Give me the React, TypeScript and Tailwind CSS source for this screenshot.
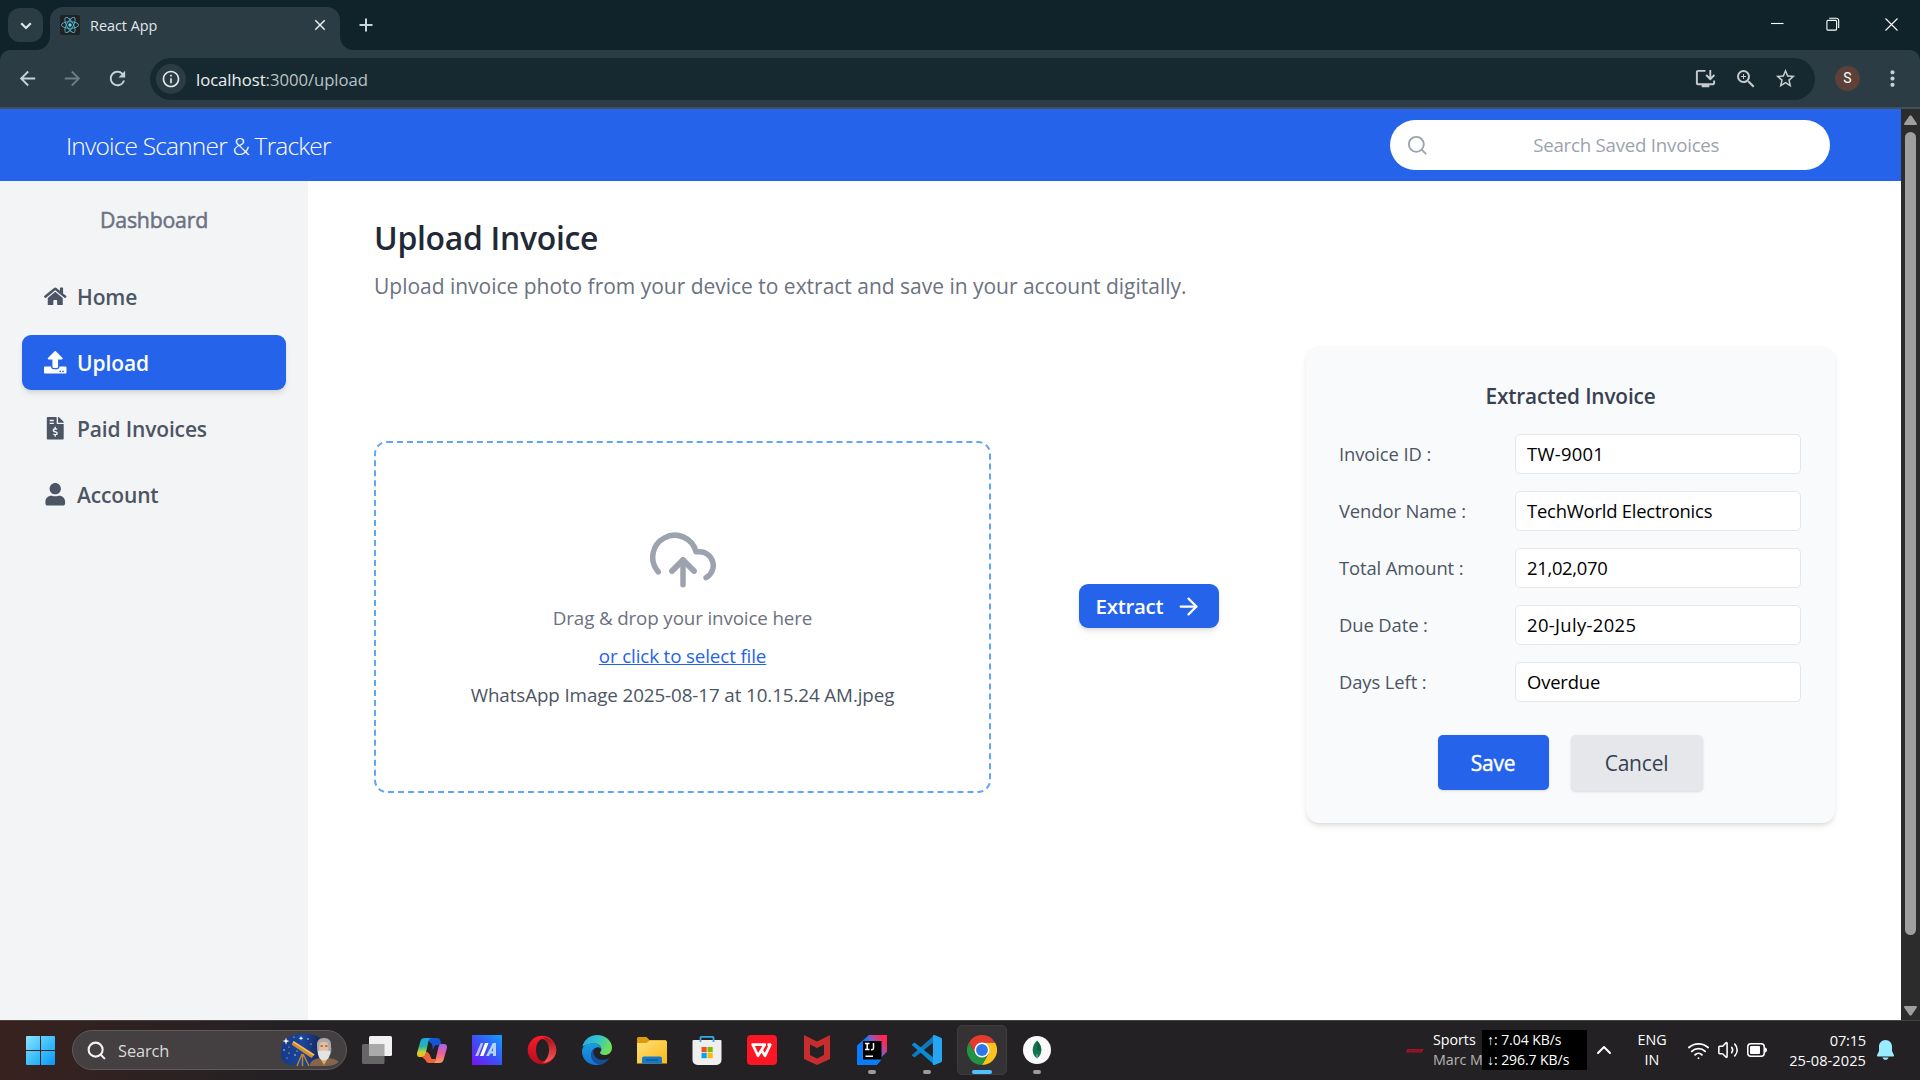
import type { ReactNode } from "react";
import { FaFileInvoiceDollar, FaHome, FaUpload, FaUser } from "react-icons/fa";
import { FiArrowRight, FiSearch, FiUploadCloud } from "react-icons/fi";
import {
  MdArrowBack,
  MdArrowForward,
  MdClose,
  MdInfoOutline,
  MdInstallDesktop,
  MdMoreVert,
  MdRefresh,
  MdStarOutline,
  MdZoomIn,
} from "react-icons/md";
import { ChevronUp, Search, Volume2, Wifi } from "lucide-react";

function ReactMark() {
  return (
    <svg viewBox="0 0 20 20" className="size-5">
      <rect width="20" height="20" rx="2" fill="#222" />
      <g fill="none" stroke="#4fb3cc" strokeWidth="0.9">
        <ellipse cx="10" cy="10" rx="8.6" ry="3.3" />
        <ellipse cx="10" cy="10" rx="8.6" ry="3.3" transform="rotate(60 10 10)" />
        <ellipse cx="10" cy="10" rx="8.6" ry="3.3" transform="rotate(120 10 10)" />
      </g>
      <circle cx="10" cy="10" r="1.7" fill="#61dafb" />
    </svg>
  );
}

function TabStrip() {
  return (
    <div className="flex h-[50px] shrink-0 bg-[#10232b]">
      <div className="ml-2 mt-2 flex h-[34px] w-[35px] items-center justify-center rounded-[12px] bg-[#2b3c44]">
        <svg viewBox="0 0 12 8" className="mt-px h-2 w-3" fill="none" stroke="#dfe5e8" strokeWidth="2.2">
          <path d="M1.2 1.2 6 6l4.8-4.8" />
        </svg>
      </div>
      <svg viewBox="0 0 14 14" className="-ml-[7px] mr-0 mt-9 h-[14px] w-[14px] self-start" fill="#2b3c44">
        <path d="M14 0v14H0C8 14 14 8 14 0z" />
      </svg>
      <div className="mt-[7px] flex h-[43px] w-[290px] items-center rounded-t-[13px] bg-[#2b3c44] pb-[7px] pl-[10px] pr-[11px]">
        <ReactMark />
        <span className="ml-[10px] flex-1 pt-px text-[14.4px] leading-5 text-[#e1e6e9]">React App</span>
        <MdClose className="size-[18px] text-[#e6ebed]" />
      </div>
      <svg viewBox="0 0 14 14" className="mt-9 h-[14px] w-[14px] self-start" fill="#2b3c44">
        <path d="M0 0v14h14C6 14 0 8 0 0z" />
      </svg>
      <svg viewBox="0 0 14 14" className="ml-[5px] mt-[18px] size-[14px]" stroke="#c8d6dc" strokeWidth="2">
        <path d="M7 .5v13M.5 7h13" />
      </svg>
      <div className="flex-1" />
      <svg viewBox="0 0 13 13" className="mt-[18px] size-[13px]" stroke="#fff" strokeWidth="1.1">
        <path d="M0 5.500h12.500" />
      </svg>
      <svg viewBox="0 0 14 14" className="ml-[42px] mt-[17px] size-[14px]" fill="none" stroke="#fff" strokeWidth="1.1">
        <rect x=".9" y="3.4" width="9.7" height="9.7" rx="1" />
        <path d="M3.2 1.2h7.3a2.2 2.2 0 0 1 2.2 2.2v7.6" />
      </svg>
      <svg viewBox="0 0 13 13" className="ml-[45px] mr-[22px] mt-[18px] size-[13px]" stroke="#fff" strokeWidth="1.1">
        <path d="M.5.5l12 12M12.500.5l-12 12" />
      </svg>
    </div>
  );
}

function Toolbar() {
  return (
    <div className="shrink-0 bg-[#10232b]">
      <div className="flex h-[59px] items-center rounded-t-[10px] border-b-2 border-[#435056] bg-[#2b3c44] text-[#c3d3da]">
        <MdArrowBack className="ml-4 size-[23px]" />
        <MdArrowForward className="ml-[22px] size-[23px] text-[#6c7d85]" />
        <MdRefresh className="ml-[22px] size-[23px]" />
        <div className="ml-[21px] flex h-[42px] w-[1665px] items-center rounded-full bg-[#162930] pl-[6px] pr-[18px] text-[#c7cbce]">
          <div className="flex size-[30px] items-center justify-center rounded-full bg-[#2b3c44]">
            <MdInfoOutline className="size-5 text-[#e1e6e9]" />
          </div>
          <div className="ml-[10px] flex-1 pt-[2px] text-[16.700px] tracking-[-0.04px] text-[#bcc2c5]">
            <span className="text-[#eceff0]">localhost</span>:3000/upload
          </div>
          <MdInstallDesktop className="size-[23px]" />
          <MdZoomIn className="ml-[17px] size-[24px]" />
          <MdStarOutline className="ml-[16px] size-[23px]" />
        </div>
        <div className="ml-[20px] flex size-[25px] items-center justify-center rounded-full bg-[#5d4037] font-[Roboto] text-[14px] text-white">
          S
        </div>
        <MdMoreVert className="ml-[20px] size-[25px]" />
      </div>
    </div>
  );
}

function AppHeader() {
  return (
    <header className="flex h-[72px] shrink-0 items-center justify-between bg-[#2563eb] pl-[66px] pr-[71px]">
      <h1 className="pt-[2px] text-[24.500px] font-light tracking-[-0.82px] text-white">Invoice Scanner &amp; Tracker</h1>
      <div className="flex h-[50px] w-[440px] items-center rounded-full bg-white px-[16px] text-[#9ca3af]">
        <FiSearch className="size-[22.500px]" />
        <span className="flex-1 pl-[18px] pr-2 text-center text-[18.700px] tracking-[-0.24px]">Search Saved Invoices</span>
      </div>
    </header>
  );
}

function NavItem({ icon, label, active = false }: { icon: ReactNode; label: string; active?: boolean }) {
  return (
    <a
      className={
        "flex h-[55px] items-center gap-[10.500px] rounded-[9px] px-[22px] text-[21px] font-semibold " +
        (active ? "bg-[#2563eb] text-white shadow-md tracking-[-0.1px]" : "text-[#4b5563] tracking-[-0.15px]")
      }
    >
      <span className="flex w-[22.500px] justify-center text-[22.500px]">{icon}</span>
      <span className="pt-[2px]">{label}</span>
    </a>
  );
}

function Sidebar() {
  return (
    <aside className="w-[308px] shrink-0 bg-[#f3f4f6] px-[22px] pt-[22px]">
      <p className="mb-[33px] text-center text-[21.300px] leading-[33px] tracking-[-0.22px] text-[#6b7280] [-webkit-text-stroke:0.5px]">
        Dashboard
      </p>
      <nav className="flex flex-col gap-[11px]">
        <NavItem icon={<FaHome />} label="Home" />
        <NavItem icon={<FaUpload />} label="Upload" active />
        <NavItem icon={<FaFileInvoiceDollar />} label="Paid Invoices" />
        <NavItem icon={<FaUser />} label="Account" />
      </nav>
    </aside>
  );
}

const fields = [
  { label: "Invoice ID :", value: "TW-9001", spacing: "tracking-[0.3px]" },
  { label: "Vendor Name :", value: "TechWorld Electronics", spacing: "tracking-[-0.2px]" },
  { label: "Total Amount :", value: "21,02,070", spacing: "tracking-[-0.3px]" },
  { label: "Due Date :", value: "20-July-2025", spacing: "tracking-[0.36px]" },
  { label: "Days Left :", value: "Overdue", spacing: "tracking-[-0.16px]" },
];

function ExtractedCard() {
  return (
    <section className="flex w-[529px] flex-col rounded-[13px] bg-[#f9fafb] px-[34px] pb-[32px] pt-[34px] shadow-md">
      <h3 className="mb-[21px] text-center text-[20.800px] font-semibold leading-[33px] tracking-[-0.15px] text-[#374151]">
        Extracted Invoice
      </h3>
      <div className="flex flex-col gap-[17px]">
        {fields.map((f) => (
          <div key={f.label} className="flex h-10 items-center justify-between text-[18.400px]">
            <span className="-ml-px tracking-[-0.1px] text-[#4b5563]">{f.label}</span>
            <div
              className={
                "flex h-10 w-[286px] items-center rounded-[5px] border border-[#e5e7eb] bg-white pl-[11px] text-black " + f.spacing
              }
            >
              {f.value}
            </div>
          </div>
        ))}
      </div>
      <div className="-ml-px mt-[33px] flex items-start justify-center gap-[22px] text-[21px]">
        <button className="h-[55px] w-[111px] rounded-[5px] bg-[#2563eb] pt-[2px] tracking-[-0.3px] text-white shadow-sm [-webkit-text-stroke:0.4px]">
          Save
        </button>
        <button className="h-[56px] w-[132px] rounded-[5px] bg-[#e5e7eb] pt-px tracking-[-0.2px] text-[#374151] shadow-sm">Cancel</button>
      </div>
    </section>
  );
}

function UploadPage() {
  return (
    <main className="flex-1 bg-white pl-[66px] pr-[66px] pt-[34px]">
      <h2 className="text-[31.900px] font-semibold leading-[45px] tracking-[-0.28px] text-[#1f2937]">Upload Invoice</h2>
      <p className="mt-[10px] text-[21px] leading-[32px] tracking-[-0.015px] text-[#6b7280]">
        Upload invoice photo from your device to extract and save in your account digitally.
      </p>
      <div className="mt-[44px] flex items-center justify-between">
        <div className="mb-[28px] mt-[95px] flex h-[352px] w-[617px] flex-col items-center self-start rounded-[13px] border-2 border-dashed border-[#60a5fa] pt-[84px]">
          <FiUploadCloud className="ml-px size-[66px] text-[#9ca3af]" />
          <p className="mt-[9.500px] text-[18.800px] leading-[30px] tracking-[-0.14px] text-[#6b7280]">Drag &amp; drop your invoice here</p>
          <p className="mt-[8px] text-[18.800px] leading-[30px] tracking-[-0.14px] text-[#2563eb] underline">or click to select file</p>
          <p className="mt-[9px] text-[18.800px] leading-[30px] tracking-[-0.1px] text-[#4b5563]">
            WhatsApp Image 2025-08-17 at 10.15.24 AM.jpeg
          </p>
        </div>
        <button className="mt-[43px] flex h-[44px] w-[140px] items-center justify-between rounded-[9px] bg-[#2563eb] pl-[17px] pr-[17px] text-[20.500px] font-semibold tracking-[-0.3px] text-white shadow-md">
          Extract
          <FiArrowRight className="size-[27px]" />
        </button>
        <ExtractedCard />
      </div>
    </main>
  );
}

function PageScrollbar() {
  return (
    <div className="flex w-[19px] shrink-0 flex-col items-center bg-[#2c2c2c]">
      <svg viewBox="0 0 13 10" className="mt-[6px] h-[10px] w-[13px]" fill="#9f9f9f">
        <path d="M5.300 1a1.500 1.500 0 0 1 2.400 0l5 7.300c.5.800 0 1.700-.9 1.700H1.200C.3 10-.2 9.100.3 8.300z" />
      </svg>
      <div className="mt-[7px] h-[803px] w-[11px] rounded-full bg-[#9f9f9f]" />
      <svg viewBox="0 0 13 10" className="mb-[4px] mt-auto h-[10px] w-[13px] rotate-180" fill="#9f9f9f">
        <path d="M5.300 1a1.500 1.500 0 0 1 2.400 0l5 7.300c.5.800 0 1.700-.9 1.700H1.200C.3 10-.2 9.100.3 8.300z" />
      </svg>
    </div>
  );
}

function WindowsLogo() {
  return (
    <svg viewBox="0 0 29 29" className="size-[29px]">
      <defs>
        <linearGradient id="win" gradientUnits="userSpaceOnUse" x1="0" y1="0" x2="29" y2="29">
          <stop offset="0" stopColor="#8be3ff" />
          <stop offset=".5" stopColor="#3fc0fb" />
          <stop offset="1" stopColor="#0a96f8" />
        </linearGradient>
      </defs>
      <path fill="url(#win)" d="M1 0h13v14H0V1a1 1 0 0 1 1-1zM15 0h13a1 1 0 0 1 1 1v13H15zM0 15h14v14H1a1 1 0 0 1-1-1zM15 15h14v13a1 1 0 0 1-1 1H15z" />
    </svg>
  );
}

function AstronomerPicture() {
  return (
    <svg viewBox="0 0 60 34" className="h-[34px] w-[60px]">
      <defs>
        <linearGradient id="sky" x1="0" y1="0" x2="1" y2="0">
          <stop offset="0" stopColor="#173a86" />
          <stop offset=".5" stopColor="#1a469c" />
          <stop offset=".8" stopColor="#182c66" />
          <stop offset="1" stopColor="#2b2f4a" stopOpacity="0" />
        </linearGradient>
      </defs>
      <path d="M3 10C7 3 15 1 24 1c10 0 18 3 22 8v23H11C3 31 0 26 1 19c0-3 .5-6 2-9z" fill="url(#sky)" />
      <g fill="#fff">
        <path d="M6 4.500l.8 2.800L9.500 8 6.800 8.900 6 12l-.8-3.100L2.500 8l2.700-.7zM21 3l.6 1.600 1.700.7-1.700.6L21 7.600l-.6-1.700-1.700-.6 1.700-.7z" />
        <circle cx="14" cy="4" r=".6" /><circle cx="4" cy="17" r=".7" /><circle cx="9" cy="20" r=".6" />
        <circle cx="15" cy="22" r=".7" /><circle cx="28" cy="6" r=".7" /><circle cx="7" cy="25" r=".5" />
        <circle cx="31" cy="11" r=".6" /><circle cx="9" cy="14" r=".5" /><circle cx="17" cy="18" r=".5" />
      </g>
      <path d="M22 21l-5 12M22.500 21v12M23 21l6 12" stroke="#c88325" strokeWidth="1.400" />
      <path d="M13.500 8l21 13.500-3 3.500L11.500 11.500z" fill="#d48f2c" />
      <path d="M13.500 8l21 13.500-1 1.300L12.800 9.300z" fill="#f3bd5c" />
      <path d="M29.500 33c1-6 6-8 14-8s13 1 15 4c-3 3-8 4-13 4z" fill="#87654c" />
      <path d="M41 27l3 5 3-5z" fill="#dcab54" />
      <path d="M37 13c-.5-5 2-8 7-8s7.500 3 7 8c.5 4 .5 7-1 9H38.500c-1-2-1.500-5-1.500-9z" fill="#a9a9a9" />
      <path d="M39.500 10c2-1.500 6.500-1.500 8.500 0l.5 9h-9.500z" fill="#e9bd9c" />
      <path d="M38 17.500c1.500 1 3 .2 5.700 0 2.800.2 4.800 1 6.300 0 .5 6-2 10-6 10s-6.500-4-6-10z" fill="#e3e3e3" />
      <path d="M40.500 13h2.300M45.200 13h2.300" stroke="#4c342b" strokeWidth="1" />
    </svg>
  );
}

function TaskView() {
  return (
    <svg viewBox="0 0 30 28" className="h-7 w-[30px]">
      <rect x="0" y="8" width="22.500" height="20" rx="1.500" fill="#666" />
      <rect x="7" y="0" width="23" height="20" rx="1.500" fill="#f1f1f1" />
      <path d="M7 8h15.500v12H8.500A1.500 1.500 0 0 1 7 18.500z" fill="#aaa" />
    </svg>
  );
}

function Copilot() {
  return (
    <svg viewBox="0 0 30 27" className="h-[27px] w-[30px]">
      <defs>
        <linearGradient id="cpa" x1="0" y1="0" x2="0" y2="1">
          <stop offset="0" stopColor="#1aa6e8" /><stop offset=".45" stopColor="#29b6a6" />
          <stop offset=".75" stopColor="#c9d334" /><stop offset="1" stopColor="#f7b51c" />
        </linearGradient>
        <linearGradient id="cpb" x1="0" y1="0" x2="0" y2="1">
          <stop offset="0" stopColor="#a766ee" /><stop offset=".5" stopColor="#ea5e9b" /><stop offset="1" stopColor="#ff9a55" />
        </linearGradient>
      </defs>
      <path d="M8 1h12c2 0 3 1 3.500 3l1.200 4h-4.500c-2 0-3 1-3.500 3l-.7 2L15 7z" fill="#1555d8" />
      <path d="M7.500 1H15c-2 0-3 1.200-3.500 3L8.700 17c-.5 2-1.700 3-3.700 3H3c-2.500 0-3.500-2-2.800-4.500L3.500 4C4 2 5.500 1 7.500 1z" fill="url(#cpa)" />
      <path d="M22.500 26H15c2 0 3-1.200 3.500-3l3-13c.5-2 1.700-3 3.700-3h2c2.300 0 3.200 2 2.600 4.500L26.500 23c-.5 2-2 3-4 3z" fill="url(#cpb)" />
      <path d="M5 20c2 0 3.200-1 3.700-3l.6-2c2 0 3.200 2 4 4l1.200 3h4.500l-.5 1c-.5 2-1.500 3-3.500 3h-3c-2 0-3-1-3.500-3z" fill="#f0643c" />
    </svg>
  );
}

function MyAsus() {
  return (
    <svg viewBox="0 0 30 30" className="size-[30px]">
      <defs>
        <linearGradient id="asus" x1="1" y1="0" x2="0" y2="1">
          <stop offset="0" stopColor="#12a0ff" /><stop offset=".5" stopColor="#3b52f6" /><stop offset="1" stopColor="#7613f5" />
        </linearGradient>
      </defs>
      <path d="M0 0h30v30H0z" fill="url(#asus)" />
      <path d="M8.800 8h2.500L6.200 21H3.200z" fill="#b9c4ff" />
      <path d="M13 8h3.500L11.500 21H8z" fill="#fff" />
      <path d="M20.800 8H24v13h-3v-2.500h-2.800L17 21h-3zM21 12.500l-1.500 3.700H21z" fill="#b5d3ff" fillRule="evenodd" />
    </svg>
  );
}

function Opera() {
  return (
    <svg viewBox="0 0 30 30" className="size-[30px]">
      <defs>
        <linearGradient id="op" x1="0" y1="0" x2="0" y2="1"><stop offset="0" stopColor="#ff1b2d" /><stop offset="1" stopColor="#b00d1f" /></linearGradient>
        <linearGradient id="oq" x1="0" y1="0" x2="0" y2="1"><stop offset="0" stopColor="#a01018" /><stop offset="1" stopColor="#ff5c5c" /></linearGradient>
      </defs>
      <ellipse cx="15" cy="15" rx="14.300" ry="14.300" fill="url(#op)" />
      <path d="M15 2c5 0 14.300 4 14.300 13S20 28.500 15 28c4-1 6-6 6-13S19 3 15 2z" fill="url(#oq)" />
      <ellipse cx="15.500" cy="15" rx="6.500" ry="10.900" fill="#232124" />
    </svg>
  );
}

function Edge() {
  return (
    <svg viewBox="0 0 30 30" className="size-[30px]">
      <defs>
        <linearGradient id="eg" x1="0" y1="0" x2="1" y2=".4"><stop offset="0" stopColor="#2aa5dc" /><stop offset=".5" stopColor="#2fc3cf" /><stop offset="1" stopColor="#6fe05a" /></linearGradient>
        <linearGradient id="eb" x1="0" y1="0" x2="0" y2="1"><stop offset="0" stopColor="#1b9de2" /><stop offset="1" stopColor="#1274cf" /></linearGradient>
      </defs>
      <path d="M.5 12C1.500 5 7.500 0 15 0c8.500 0 15 6 15 12.500 0 5-3.500 7.500-7.500 7.500-3 0-4.500-1-4.500-2.200 0-1 1.300-1.500 1.300-3.600C19.300 11 16.500 8.500 12 8.500 6.500 8.500 2 10.500.5 12z" fill="url(#eg)" />
      <path d="M0 15.500C.5 10.500 5.500 8.300 11 8.300c4.500 0 8 2.200 8.300 5.900-1-1.400-2.600-2-4.300-1.800-3.500.5-6 4-5.300 8C10.500 25 14 29 19 29.300 8 32.500-.5 25 0 15.500z" fill="url(#eb)" />
      <path d="M14 12.700c-3 2-3 5.500-1.500 8 2.500 4.500 9.500 5.500 14.700 2.300C25 27 21 29.500 17.500 29.700 12 28.500 8.500 24.500 9 19c.3-3.500 2.500-5.900 5-6.300z" fill="#11509c" />
    </svg>
  );
}

function Explorer() {
  return (
    <svg viewBox="0 0 30 27" className="h-[27px] w-[30px]">
      <defs><linearGradient id="fo" x1="0" y1="0" x2="1" y2="1"><stop offset="0" stopColor="#ffe07a" /><stop offset="1" stopColor="#fab915" /></linearGradient></defs>
      <path d="M0 1.500A1.500 1.500 0 0 1 1.500 0h8l3 3H29v5H0z" fill="#dc9b0e" />
      <path d="M0 6h9.500L12.500 3.500H28.500A1.500 1.500 0 0 1 30 5v21.500H0z" fill="url(#fo)" />
      <path d="M5 26.500V21.500a2 2 0 0 1 2-2h16a2 2 0 0 1 2 2v5z" fill="#1579cc" />
      <path d="M9 23h12" stroke="#0b4f93" strokeWidth="1.200" />
    </svg>
  );
}

function Store() {
  return (
    <svg viewBox="0 0 30 30" className="size-[30px]">
      <path d="M.5 6a1 1 0 0 1 1-1h27a1 1 0 0 1 1 1v19a5 5 0 0 1-5 5h-19a5 5 0 0 1-5-5z" fill="#efefef" />
      <path d="M8.500 7V2.500a.6.6 0 0 1 .6-.6h11.800a.6.6 0 0 1 .6.6V7" fill="none" stroke="#2aaee6" strokeWidth="1.800" />
      <path d="M9.500 12h5.200v5.200H9.500z" fill="#f25022" /><path d="M15.500 12h5.200v5.200h-5.200z" fill="#7fba00" />
      <path d="M9.500 18h5.200v5.200H9.500z" fill="#00a4ef" /><path d="M15.500 18h5.200v5.200h-5.200z" fill="#ffb900" />
    </svg>
  );
}

function Wps() {
  return (
    <svg viewBox="0 0 30 30" className="size-[30px]">
      <rect width="30" height="30" rx="4" fill="#fd1524" />
      <path
        d="M4.500 9.700h13.300l-6.800 11.100L5.800 9.700M14.500 15l3.500 5.800 5.300-11.100H20.500"
        fill="none"
        stroke="#fff"
        strokeWidth="2.700"
        strokeLinejoin="round"
      />
    </svg>
  );
}

function McAfee() {
  return (
    <svg viewBox="0 0 28 30" className="h-[30px] w-[28px]">
      <path d="M1 0l13 6.500L27 0v24l-13 6L1 24z" fill="#c52d2f" />
      <path d="M7 9.500l7 3.500 7-3.500V20l-7 3.500L7 20z" fill="#232124" />
    </svg>
  );
}

function IntelliJ() {
  return (
    <svg viewBox="0 0 30 30" className="size-[30px]">
      <defs><linearGradient id="ij" x1="0" y1="0.800" x2="1" y2="0"><stop offset=".1" stopColor="#087cfa" /><stop offset=".5" stopColor="#7a60c8" /><stop offset=".8" stopColor="#fe2857" /></linearGradient></defs>
      <path d="M12 0h18v16.500L22 25 13 18 6 6z" fill="url(#ij)" />
      <path d="M0 10.500L12 0 9 9l9 15h7l-5 6H0z" fill="#087cfa" />
      <path d="M5 6h7l12 2v17H5z" fill="#3b6fe0" />
      <path d="M6 6h18.500v18.500H6z" fill="#000" />
      <path d="M8 8.500h4.500M10.200 8.500v6M8 14.500h4.500M16.500 8v5c0 1.500-.8 1.800-2.500 1.600M8.500 21.300h7.500" fill="none" stroke="#fff" strokeWidth="1.500" />
    </svg>
  );
}

function VsCode() {
  return (
    <svg viewBox="0 0 30 30" className="size-[30px]">
      <path d="M22.500 6.500L2.600 22.600.4 21a1 1 0 0 1 0-1.600L22.500 0z" fill="#0f78bd" />
      <path d="M22.500 23.500L2.600 7.400.4 9a1 1 0 0 0 0 1.600L22.500 30z" fill="#0a8ad8" />
      <path d="M22.500 0L29 2.800c.6.300 1 .8 1 1.500v21.400c0 .7-.4 1.200-1 1.500L22.500 30c-.8.300-1.600-.1-1.600-1V1c0-.9.800-1.300 1.600-1z" fill="#27a4f2" />
    </svg>
  );
}

function Chrome() {
  return (
    <svg viewBox="0 0 48 48" className="size-[30px]">
      <path d="M24 24V12h20.800A24 24 0 0 1 24 48l10.400-18z" fill="#fcc31e" />
      <path d="M24 24l10.400 6L24 48A24 24 0 0 1 3.200 12l10.400 18z" fill="#229342" />
      <path d="M24 12h20.800A24 24 0 0 0 3.200 12l10.400 18z" fill="#e33b2e" />
      <circle cx="24" cy="24" r="12" fill="#fff" />
      <circle cx="24" cy="24" r="9.500" fill="#2f76e8" />
    </svg>
  );
}

function MongoCompass() {
  return (
    <svg viewBox="0 0 28 28" className="size-7">
      <circle cx="14" cy="14" r="14" fill="#f8f9f8" />
      <path d="M14 4.500c3 3 4.300 6 4.300 9.500 0 3.800-1.500 6-3.800 8h-1c-2.300-2-3.800-4.200-3.800-8C9.700 10.500 11 7.500 14 4.500z" fill="#13724f" />
      <path d="M14 5v9.500h4.300c0-4-1.500-7-4.300-9.500z" fill="#0d5f42" />
      <path d="M14 18v5" stroke="#9fc7b5" strokeWidth=".8" />
    </svg>
  );
}

function TaskSlot({ children, state = "idle" }: { children: ReactNode; state?: "idle" | "running" | "active" }) {
  return (
    <div className="flex w-[55px] justify-center">
      <div
        className={
          "relative flex size-[50px] items-center justify-center rounded-[5px] " +
          (state === "active" ? "border border-[#3d3b3e] bg-[#343235]" : "")
        }
      >
        {children}
        {state === "running" && <span className="absolute bottom-px left-[21px] h-1 w-2 rounded-full bg-[#9b9b9b]" />}
        {state === "active" && <span className="absolute bottom-0 left-[14px] h-1 w-5 rounded-full bg-[#4cc2ff]" />}
      </div>
    </div>
  );
}

function Taskbar() {
  return (
    <footer className="flex h-[60px] shrink-0 items-center border-t border-[#454345] bg-linear-to-r from-[#38221f] via-[#232124] via-15% to-[#232124] pb-px text-white">
      <div className="ml-[26px]">
        <WindowsLogo />
      </div>
      <div className="ml-[17px] flex h-10 w-[275px] items-center rounded-full border border-[#5e5a5b] bg-[#444041] pl-[13px] pr-[6px]">
        <Search className="size-[21px] text-[#f2f2f2]" strokeWidth={2.400} />
        <span className="ml-[11px] flex-1 pt-[2px] text-[16.400px] tracking-[-0.1px] text-[#dadada]">Search</span>
        <AstronomerPicture />
      </div>
      <div className="ml-[2.500px] flex">
        <TaskSlot><TaskView /></TaskSlot>
        <TaskSlot><Copilot /></TaskSlot>
        <TaskSlot><MyAsus /></TaskSlot>
        <TaskSlot><Opera /></TaskSlot>
        <TaskSlot><Edge /></TaskSlot>
        <TaskSlot><Explorer /></TaskSlot>
        <TaskSlot><Store /></TaskSlot>
        <TaskSlot><Wps /></TaskSlot>
        <TaskSlot><McAfee /></TaskSlot>
        <TaskSlot state="running"><IntelliJ /></TaskSlot>
        <TaskSlot state="running"><VsCode /></TaskSlot>
        <TaskSlot state="active"><Chrome /></TaskSlot>
        <TaskSlot state="running"><MongoCompass /></TaskSlot>
      </div>
      <div className="flex-1" />
      <svg viewBox="0 0 18 5" className="h-[5px] w-[18px]">
        <path d="M1.500 1h16L16 4.500H0z" fill="#a3142c" />
        <path d="M3 2.800h12" stroke="#48101a" strokeWidth=".8" strokeDasharray="1.500 1" />
      </svg>
      <div className="ml-[9px] flex w-[49px] flex-col overflow-hidden whitespace-nowrap text-[14.300px] leading-5 tracking-[-0.05px]">
        <span>Sports</span>
        <span className="text-[#b5b5b5]">Marc M</span>
      </div>
      <div className="flex h-10 w-[105px] flex-col whitespace-nowrap bg-black pl-[5px] text-[14px] leading-5 tracking-[-0.06px]">
        <span>↑: 7.04 KB/s</span>
        <span>↓: 296.7 KB/s</span>
      </div>
      <ChevronUp className="ml-[5px] size-6" strokeWidth={2} />
      <div className="ml-[16px] flex w-[40px] flex-col items-center text-[14.300px] leading-5">
        <span>ENG</span>
        <span>IN</span>
      </div>
      <Wifi className="ml-[15px] size-[23px]" strokeWidth={1.900} />
      <Volume2 className="ml-[7px] size-[22px]" strokeWidth={1.700} />
      <svg viewBox="0 0 20 14" className="ml-[8px] h-[14px] w-5">
        <rect x=".8" y=".8" width="16.400" height="12.400" rx="3" fill="none" stroke="#fff" strokeWidth="1.500" />
        <rect x="3" y="3" width="10" height="8" rx="1" fill="#fff" />
        <path d="M18 4.500c1.500.3 2 1.300 2 2.500s-.5 2.200-2 2.500z" fill="#fff" />
      </svg>
      <div className="ml-[19px] flex w-[80px] flex-col items-end whitespace-nowrap text-[14.600px] leading-5">
        <span className="tracking-[-0.2px]">07:15</span>
        <span className="tracking-[0.07px]">25-08-2025</span>
      </div>
      <svg viewBox="0 0 17 20" className="ml-[11px] mr-[26px] h-5 w-[17px]" fill="#99ebff">
        <path d="M8.500 0C4.500 0 2 3 2 6.500V11L.1 15c-.3.800.2 1.500 1 1.500h14.800c.8 0 1.300-.7 1-1.500L15 11V6.500C15 3 12.500 0 8.500 0zM5.500 17.500c.5 1.500 1.600 2.300 3 2.300s2.500-.8 3-2.300z" />
      </svg>
    </footer>
  );
}

export default function App() {
  return (
    <div className="flex h-[1080px] w-[1920px] flex-col overflow-hidden font-['Open_Sans',sans-serif]">
      <TabStrip />
      <Toolbar />
      <div className="flex min-h-0 flex-1">
        <div className="flex min-w-0 flex-1 flex-col">
          <AppHeader />
          <div className="flex min-h-0 flex-1">
            <Sidebar />
            <UploadPage />
          </div>
        </div>
        <PageScrollbar />
      </div>
      <Taskbar />
    </div>
  );
}
